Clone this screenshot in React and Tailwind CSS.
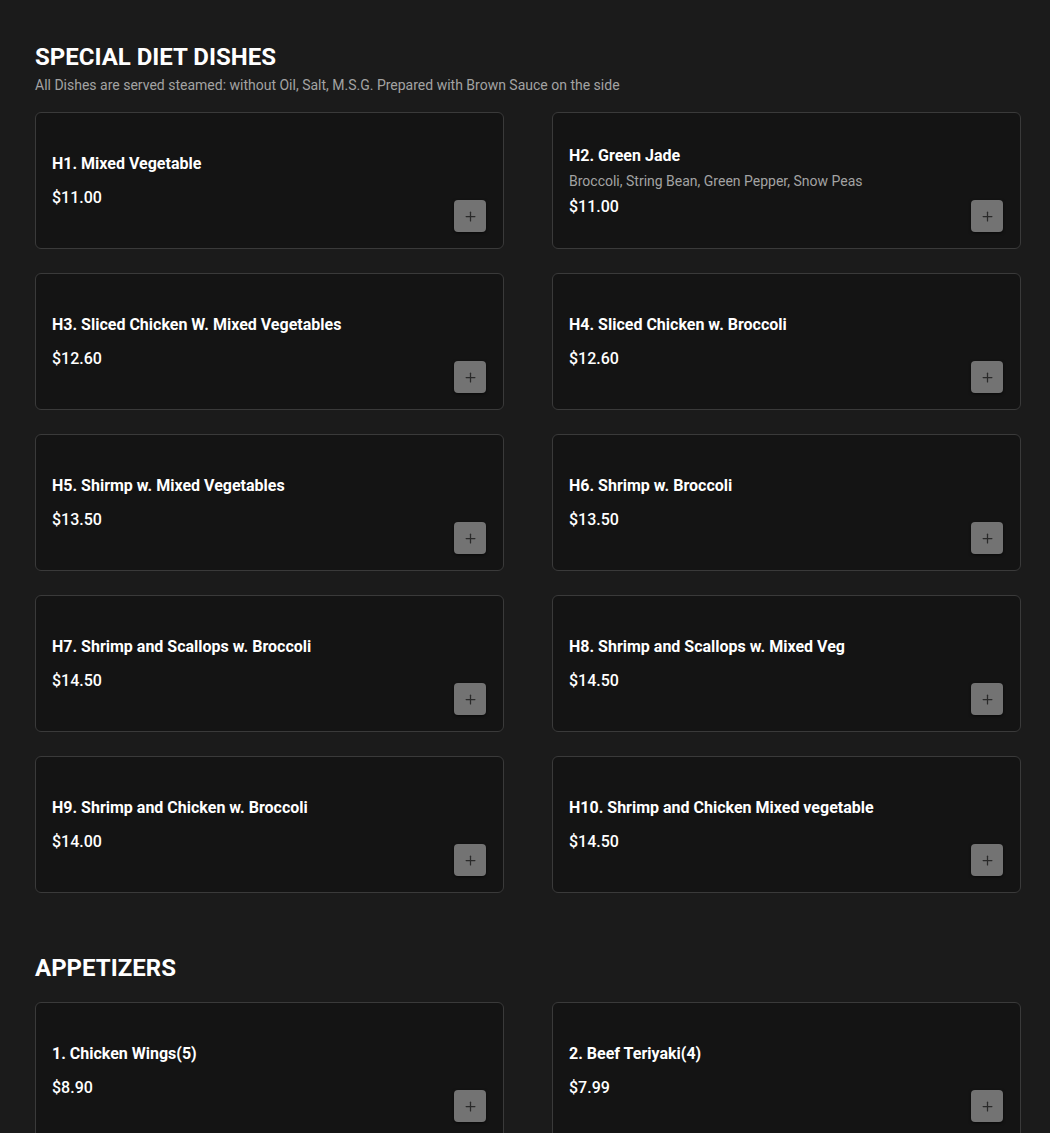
import { Plus } from 'lucide-react';

const sections = [
  {
    title: 'SPECIAL DIET DISHES',
    note: 'All Dishes are served steamed: without Oil, Salt, M.S.G. Prepared with Brown Sauce on the side',
    items: [
      { name: 'H1. Mixed Vegetable', price: '$11.00' },
      { name: 'H2. Green Jade', desc: 'Broccoli, String Bean, Green Pepper, Snow Peas', price: '$11.00' },
      { name: 'H3. Sliced Chicken W. Mixed Vegetables', price: '$12.60' },
      { name: 'H4. Sliced Chicken w. Broccoli', price: '$12.60' },
      { name: 'H5. Shirmp w. Mixed Vegetables', price: '$13.50' },
      { name: 'H6. Shrimp w. Broccoli', price: '$13.50' },
      { name: 'H7. Shrimp and Scallops w. Broccoli', price: '$14.50' },
      { name: 'H8. Shrimp and Scallops w. Mixed Veg', price: '$14.50' },
      { name: 'H9. Shrimp and Chicken w. Broccoli', price: '$14.00' },
      { name: 'H10. Shrimp and Chicken Mixed vegetable', price: '$14.50' },
    ],
  },
  {
    title: 'APPETIZERS',
    items: [
      { name: '1. Chicken Wings(5)', price: '$8.90' },
      { name: '2. Beef Teriyaki(4)', price: '$7.99' },
    ],
  },
];

function DishCard({ item }) {
  return (
    <div className="flex min-h-[137px] rounded-md border border-[#3a3a3a] bg-[#141414] pl-4 pr-4 pb-4">
      <div className={`flex-1 self-center ${item.desc ? 'pt-[18px]' : 'pt-4'}`}>
        <h3 className="text-base font-bold leading-6 text-white">{item.name}</h3>
        {item.desc && <p className="mt-[3px] text-sm leading-5 text-[#a3a3a3]">{item.desc}</p>}
        <p className={`text-base font-medium leading-6 text-white ${item.desc ? 'mt-1' : 'mt-[10px]'}`}>
          {item.price}
        </p>
      </div>
      <button className="mr-px flex h-[32px] w-[32px] shrink-0 items-center justify-center self-end rounded-[4px] bg-[#737373] text-[#2a2a2a] shadow-[0_1px_3px_rgba(0,0,0,0.6)]">
        <Plus size={15} strokeWidth={2} />
      </button>
    </div>
  );
}

export default function App() {
  return (
    <div className="min-h-screen bg-[#1b1b1b] pl-[35px] pr-[29px] pt-[41px] pb-10 font-['Roboto',sans-serif]">
      <div className="space-y-[59px]">
        {sections.map((s) => (
          <section key={s.title}>
            <h2 className="text-2xl font-bold leading-8 text-white">{s.title}</h2>
            {s.note && <p className="mt-0.5 text-sm leading-5 text-[#a3a3a3]">{s.note}</p>}
            <div className={`grid grid-cols-2 gap-x-12 gap-y-6 ${s.note ? 'mt-[17px]' : 'mt-[18px]'}`}>
              {s.items.map((item) => (
                <DishCard key={item.name} item={item} />
              ))}
            </div>
          </section>
        ))}
      </div>
    </div>
  );
}
